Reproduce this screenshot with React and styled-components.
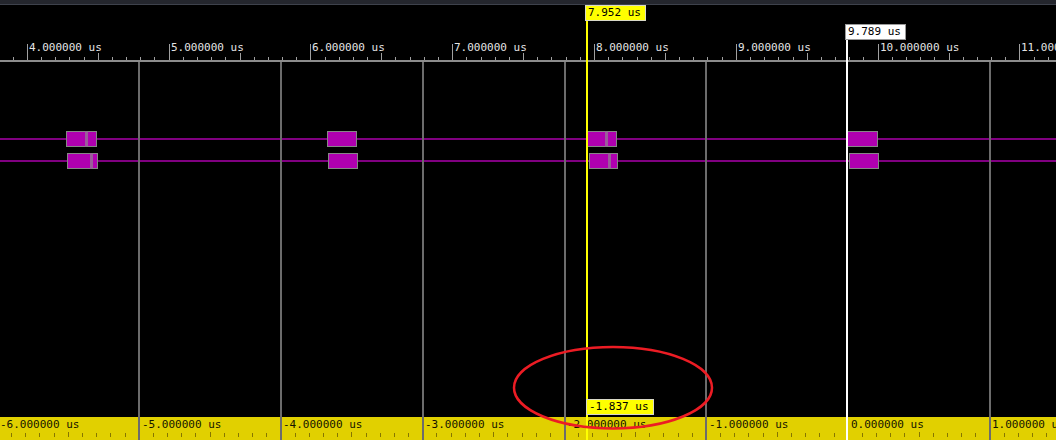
import React from "react";
import styled, { createGlobalStyle } from "styled-components";

const PX_PER_US = 141.8;
const ORIGIN_T = 4;
const ORIGIN_X = 26.8;
const xAt = (t) => ORIGIN_X + (t - ORIGIN_T) * PX_PER_US;

const CURSOR_A = 7.952;
const CURSOR_B = 9.789;
const xDelta = (d) => xAt(CURSOR_B) + d * PX_PER_US;
const WIDTH = 1056;

const rows = [
  [
    [[4.273, 4.414], [4.414, 4.488]],
    [[6.117, 6.322]],
    [[7.952, 8.088], [8.088, 8.155]],
    [[9.784, 9.996]],
  ],
  [
    [[4.287, 4.453], [4.453, 4.497]],
    [[6.124, 6.329]],
    [[7.965, 8.106], [8.106, 8.165]],
    [[9.798, 10.005]],
  ],
];

const GlobalStyle = createGlobalStyle`
  html, body { margin: 0; padding: 0; background: #000; }
  body { font-family: "DejaVu Sans Mono", "Liberation Mono", monospace; }
`;

const Viewer = styled.div`
  position: relative;
  width: ${WIDTH}px;
  height: 440px;
  overflow: hidden;
  background: #000;
  display: flex;
  flex-direction: column;
  font-family: "DejaVu Sans Mono", "Liberation Mono", monospace;
  font-size: 11px;
`;

const TitleStrip = styled.div`
  height: 4px;
  flex: none;
  background: #24262d;
  border-bottom: 1px solid #3e424c;
`;

const TimeRuler = styled.div`
  position: relative;
  flex: none;
  height: 55px;
  border-bottom: 2px solid #8c8c8c;
`;

const TickLayer = styled.svg`
  position: absolute;
  left: 0;
  top: 0;
  display: block;
`;

const RulerLabel = styled.span`
  position: absolute;
  top: ${(p) => p.$top}px;
  line-height: 13px;
  white-space: pre;
  color: ${(p) => p.$color};
`;

const WaveArea = styled.div`
  flex: 1;
  display: flex;
  flex-direction: column;
  gap: 6px;
  padding-top: 69px;
`;

const Track = styled.div`
  position: relative;
  height: 16px;
  &::before {
    content: "";
    position: absolute;
    left: 0;
    right: 0;
    top: 7px;
    height: 2px;
    background: #800080;
  }
`;

const Pulse = styled.div`
  position: absolute;
  top: 0;
  height: 16px;
  box-sizing: border-box;
  border: 1px solid #868686;
  border-right-width: ${(p) => (p.$openRight ? 0 : 1)}px;
  border-left: ${(p) => (p.$joinedLeft ? "3px solid #9a5c9a" : "1px solid #868686")};
  background: #b000b0;
`;

const DeltaRuler = styled.div`
  position: relative;
  flex: none;
  height: 23px;
  background: #e1d000;
`;

const GridLayer = styled.div`
  position: absolute;
  left: 0;
  right: 0;
  top: 62px;
  bottom: 0;
  pointer-events: none;
`;

const GridLine = styled.div`
  position: absolute;
  top: 0;
  bottom: 0;
  width: 2px;
  background: #6c6c6c;
`;

const CursorLine = styled.div`
  position: absolute;
  top: ${(p) => p.$top}px;
  bottom: 0;
  width: 2px;
  background: ${(p) => p.$color};
`;

const CursorTag = styled.div`
  position: absolute;
  top: ${(p) => p.$top}px;
  height: 16px;
  box-sizing: border-box;
  padding: 0 4px 0 2px;
  line-height: 14px;
  white-space: pre;
  color: #000;
  background: ${(p) => p.$bg};
  border: 1px solid ${(p) => p.$border};
`;

const Annotation = styled.svg`
  position: absolute;
  left: 0;
  top: 0;
  pointer-events: none;
`;

function topTicks() {
  const out = [];
  for (let i = -3; i <= 80; i++) {
    const x = Math.round(xAt(ORIGIN_T + i * 0.1)) + 0.5;
    if (x < 0 || x > WIDTH) continue;
    const major = i % 10 === 0;
    const mid = !major && Math.abs(i % 10) === 5;
    const h = major ? 16 : mid ? 7 : 3;
    out.push(<line key={i} x1={x} x2={x} y1={55 - h} y2={55} stroke="#a0a0a0" strokeWidth="1" />);
  }
  return out;
}

function bottomTicks() {
  const out = [];
  for (let i = -70; i <= 20; i++) {
    if (i % 10 === 0) continue;
    const x = Math.round(xDelta(i * 0.1)) + 0.5;
    if (x < 0 || x > WIDTH) continue;
    const mid = Math.abs(i % 10) === 5;
    out.push(<line key={i} x1={x} x2={x} y1={mid ? 15 : 16} y2={20} stroke="#867600" strokeWidth="1" />);
  }
  return out;
}

const fmt = (v) => `${v.toFixed(6)} us`;

export default function App() {
  const majors = [4, 5, 6, 7, 8, 9, 10, 11];
  const deltas = [-6, -5, -4, -3, -2, -1, 0, 1];
  const xA = Math.floor(xAt(CURSOR_A)) - 1;
  const xB = Math.floor(xAt(CURSOR_B)) - 1;

  return (
    <>
      <GlobalStyle />
      <Viewer>
        <TitleStrip />
        <TimeRuler>
          <TickLayer width={WIDTH} height={55}>{topTicks()}</TickLayer>
          {majors.map((t) => (
            <RulerLabel key={t} $top={36} $color="#e4e4e4" style={{ left: Math.round(xAt(t)) + 2 }}>
              {fmt(t)}
            </RulerLabel>
          ))}
        </TimeRuler>
        <WaveArea>
          {rows.map((pulses, r) => (
            <Track key={r}>
              {pulses.map((segs, g) =>
                segs.map(([a, b], k) => {
                  const l = Math.round(xAt(a)) - (k > 0 ? 1 : 0);
                  const w = Math.round(xAt(b)) - l + 1;
                  return (
                    <Pulse
                      key={`${g}-${k}`}
                      $openRight={k < segs.length - 1}
                      $joinedLeft={k > 0}
                      style={{ left: l, width: w }}
                    />
                  );
                })
              )}
            </Track>
          ))}
        </WaveArea>
        <DeltaRuler>
          <TickLayer width={WIDTH} height={23}>{bottomTicks()}</TickLayer>
          {deltas.map((d) => (
            <RulerLabel key={d} $top={1} $color="#141400" style={{ left: Math.round(xDelta(d)) + 3 }}>
              {fmt(d)}
            </RulerLabel>
          ))}
        </DeltaRuler>

        <GridLayer>
          {deltas.filter((d) => d !== 0).map((d) => (
            <GridLine key={d} style={{ left: Math.floor(xDelta(d)) }} />
          ))}
        </GridLayer>

        <CursorLine $top={21} $color="#ffff00" style={{ left: xA }} />
        <CursorTag $top={5} $bg="#ffff00" $border="#d8d8c8" style={{ left: xA - 1 }}>
          7.952 us
        </CursorTag>

        <CursorLine $top={40} $color="#ffffff" style={{ left: xB }} />
        <CursorTag $top={24} $bg="#ffffff" $border="#9a9a9a" style={{ left: xB - 1 }}>
          9.789 us
        </CursorTag>

        <CursorTag $top={399} $bg="#ffff00" $border="#d8d8c8" style={{ left: xA }}>
          -1.837 us
        </CursorTag>

        <Annotation width={WIDTH} height={440}>
          <ellipse cx="613" cy="387.7" rx="99" ry="40.7" fill="none" stroke="#ec1c24" strokeWidth="2.5" />
        </Annotation>
      </Viewer>
    </>
  );
}
